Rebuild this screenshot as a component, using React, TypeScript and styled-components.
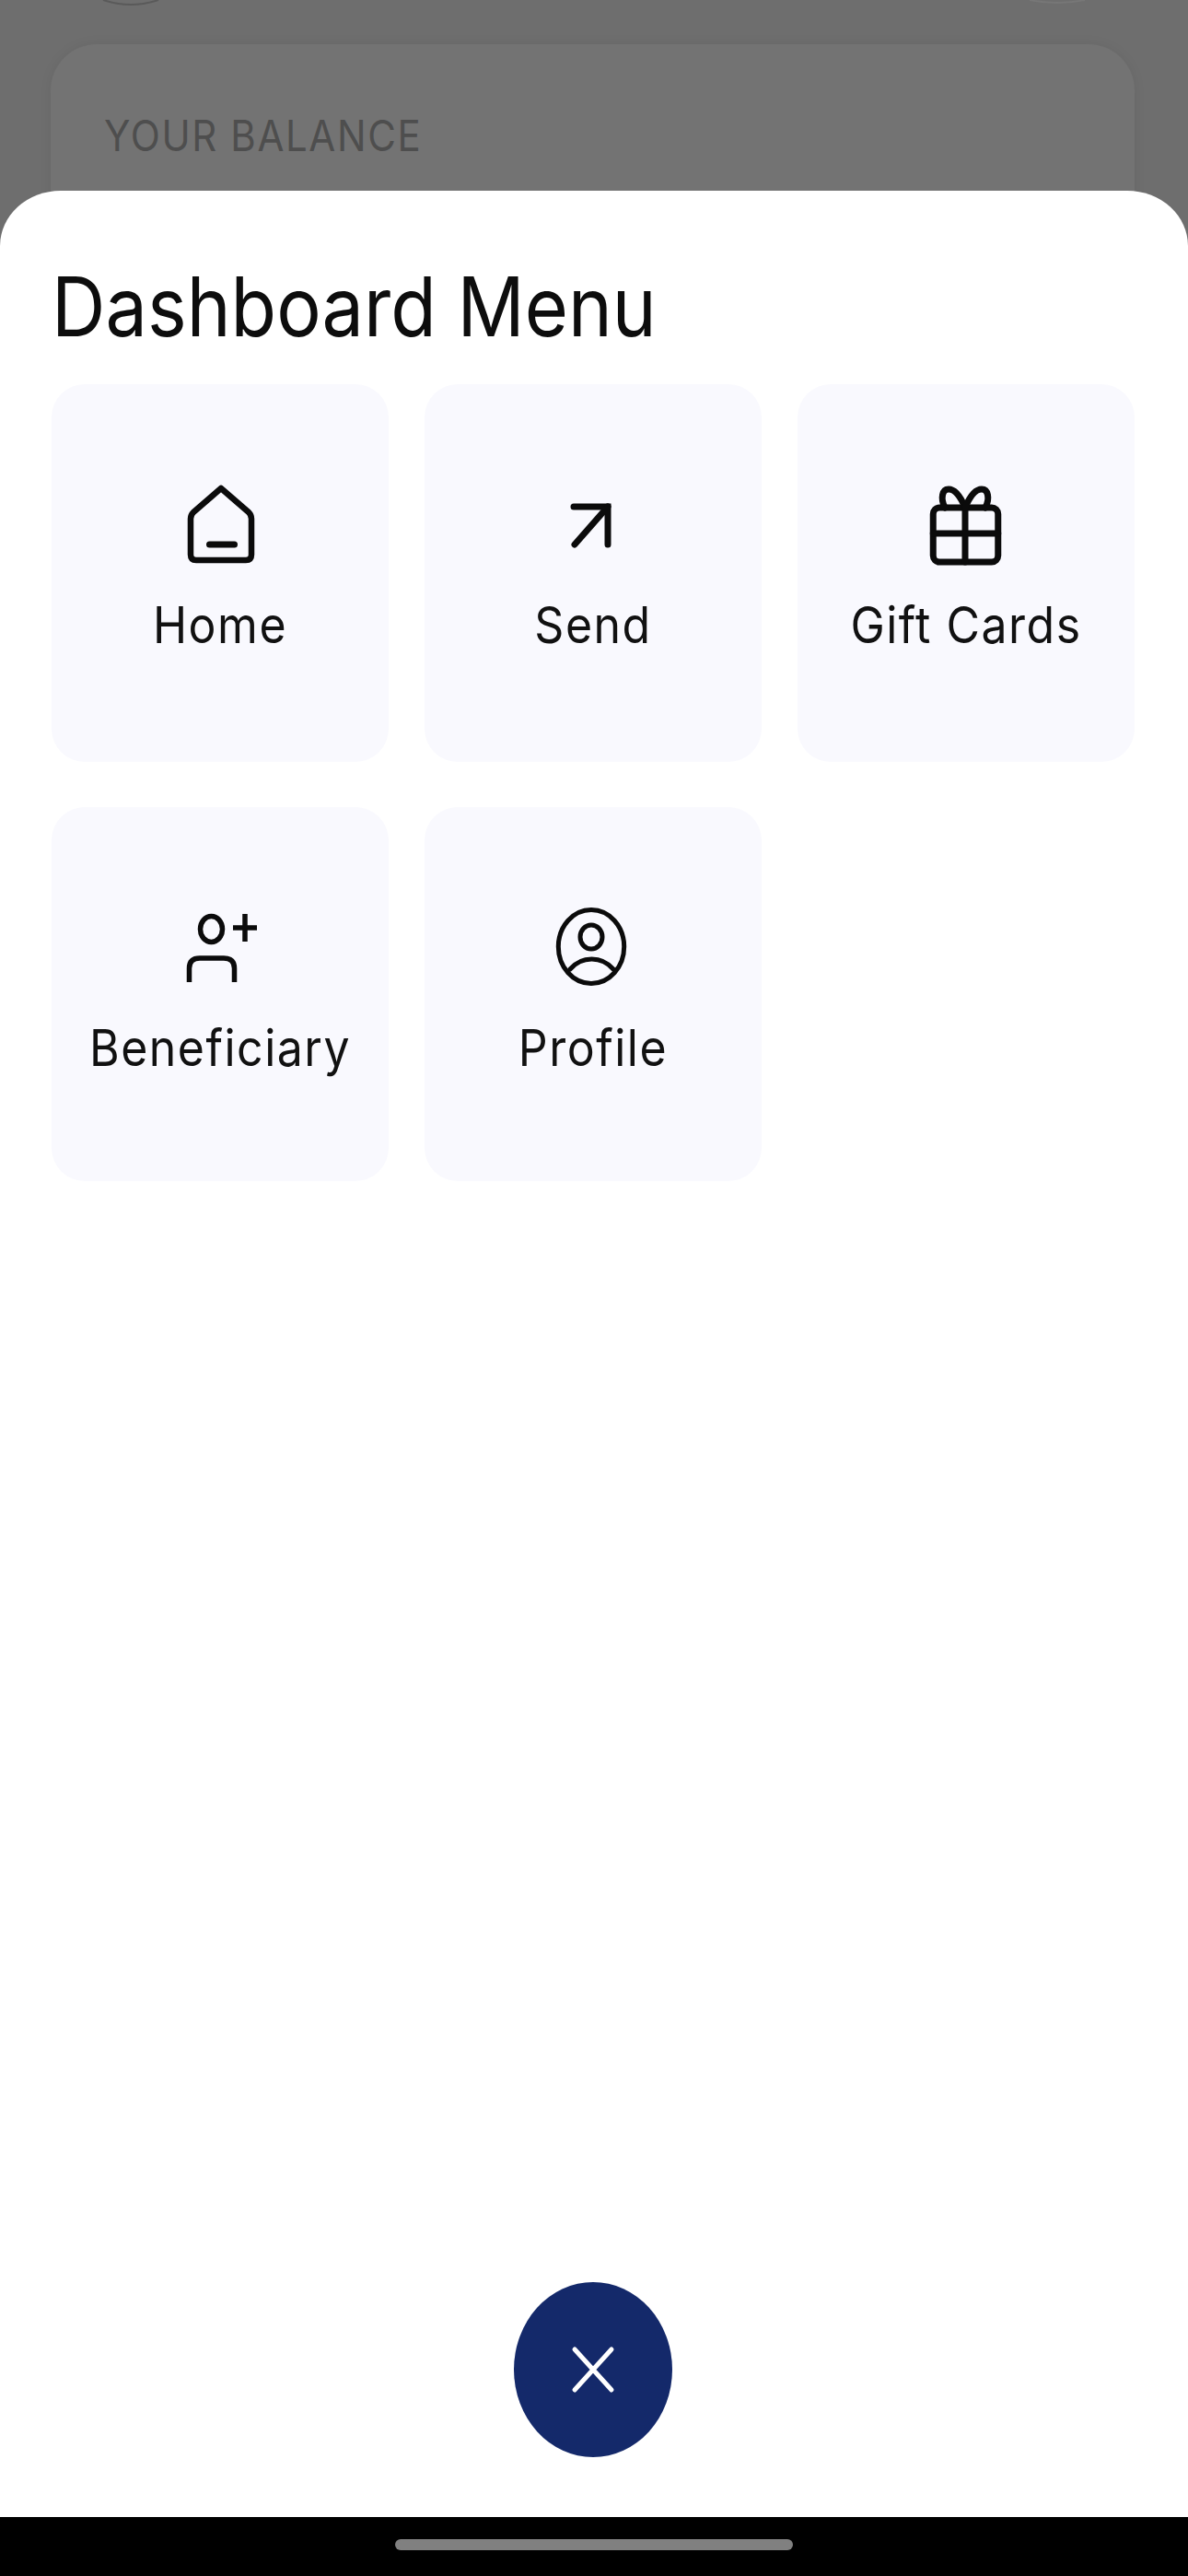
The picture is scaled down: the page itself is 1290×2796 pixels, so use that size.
import React from "react";
import styled, { createGlobalStyle } from "styled-components";

const Global = createGlobalStyle`
  html, body { margin: 0; padding: 0; background: #6e6e6e; }
  * { box-sizing: border-box; }
`;

const Screen = styled.div`
  width: 1290px;
  height: 2796px;
  display: flex;
  flex-direction: column;
  overflow: hidden;
  background: #6e6e6e;
  font-family: Inter, "Liberation Sans", sans-serif;
`;

const Backdrop = styled.div`
  height: 267px;
  flex: none;
  background: #6e6e6e;
  padding: 48px 58px 0 55px;
  overflow: hidden;
  position: relative;
`;

const PeekIcons = styled.svg`
  position: absolute;
  left: 0;
  top: 0;
`;

const BalanceCard = styled.div`
  height: 260px;
  background: #737373;
  border-radius: 50px 50px 0 0;
  box-shadow: 0 0 14px rgba(0, 0, 0, 0.06);
  padding: 74px 58px;
`;

const BalanceLabel = styled.div`
  font-size: 42px;
  line-height: 46px;
  letter-spacing: 1.6px;
  color: #4e4e4e;
  transform: scaleY(1.1);
  transform-origin: left top;
`;

const Sheet = styled.main`
  flex: 1;
  background: #fff;
  border-radius: 66px 66px 0 0 / 60px 60px 0 0;
  margin-top: -60px;
  position: relative;
  padding: 81px 58px 65px 56px;
  display: flex;
  flex-direction: column;
`;

const Title = styled.h1`
  margin: 0 0 47px 0;
  font-size: 81px;
  line-height: 82px;
  font-weight: 400;
  color: #0d0d0d;
  transform: scaleY(1.1);
  transform-origin: left top;
`;

const Grid = styled.div`
  display: grid;
  grid-template-columns: repeat(3, 366px);
  grid-template-rows: 410px 406px;
  column-gap: 39px;
  row-gap: 49px;
`;

const Tile = styled.div`
  background: #f9f9fe;
  border-radius: 36px;
  display: flex;
  flex-direction: column;
  align-items: center;
  padding-top: 106px;
`;

const TileIcon = styled.svg`
  width: 96px;
  height: 96px;
  flex: none;
  fill: none;
  stroke: #0b0b0b;
  stroke-linecap: round;
  stroke-linejoin: round;
`;

const TileLabel = styled.div`
  margin-top: 31px;
  font-size: 50px;
  line-height: 56px;
  color: #111;
  letter-spacing: 1.5px;
  transform: scaleY(1.1);
`;

const Fab = styled.button`
  margin: auto auto 0;
  width: 172px;
  height: 190px;
  flex: none;
  border: 0;
  padding: 0;
  border-radius: 50%;
  background: #14296a;
  display: flex;
  align-items: center;
  justify-content: center;
`;

const NavBar = styled.div`
  height: 64px;
  flex: none;
  background: #000;
  display: flex;
  justify-content: center;
  padding-top: 24px;
`;

const HomePill = styled.div`
  width: 432px;
  height: 12px;
  border-radius: 6px;
  background: #808080;
`;

const items = [
  {
    label: "Home",
    icon: (
      <TileIcon viewBox="0 0 96 96" strokeWidth={6.5}>
        <path d="M49 7 L79 33 Q82 36 82 40 V79 Q82 85 76 85 H22 Q16 85 16 79 V40 Q16 36 19 33 Z" />
        <path d="M36.5 68 H63.5" strokeWidth={7} />
      </TileIcon>
    ),
  },
  {
    label: "Send",
    icon: (
      <TileIcon viewBox="0 0 96 96" strokeWidth={7}>
        <path d="M27 27 H64 V68" strokeLinejoin="miter" />
        <path d="M64 27 L28 68" />
      </TileIcon>
    ),
  },
  {
    label: "Gift Cards",
    icon: (
      <TileIcon viewBox="0 0 96 96" strokeWidth={7}>
        <rect x="12.25" y="28" width="70.5" height="59" rx="7" />
        <path d="M12.25 56 H82.75 M47 28 V87" />
        <path d="M47 28 C42 16 36 8 29 8 C22 8 20 18 25 28" />
        <path d="M47 28 C52 16 58 8 65 8 C72 8 74 18 69 28" />
      </TileIcon>
    ),
  },
  {
    label: "Beneficiary",
    icon: (
      <TileIcon viewBox="0 0 96 96" strokeWidth={5.5}>
        <ellipse cx="38.5" cy="26.5" rx="12" ry="14" />
        <path d="M14.5 84 V69 Q14.5 58 26 58 H52 Q63.5 58 63.5 69 V84" strokeLinecap="butt" />
        <path d="M62 25 H88 M75 10 V40" strokeLinecap="butt" />
      </TileIcon>
    ),
  },
  {
    label: "Profile",
    icon: (
      <TileIcon viewBox="0 0 96 96" strokeWidth={5}>
        <ellipse cx="46" cy="45.5" rx="35.7" ry="40" />
        <ellipse cx="46" cy="35" rx="12" ry="13" />
        <path d="M23 70 C29 63 37 59 46.5 59 C56 59 64 63 70 70" />
      </TileIcon>
    ),
  },
];

export default function App() {
  return (
    <Screen>
      <Global />
      <Backdrop>
        <PeekIcons width="1290" height="12" viewBox="0 0 1290 12" fill="none" stroke="#5a5a5a" strokeWidth="2">
          <path d="M112 0 Q142 10 172 0" />
          <path d="M1118 0 Q1148 6 1178 0" stroke="#777" />
        </PeekIcons>
        <BalanceCard>
          <BalanceLabel>YOUR BALANCE</BalanceLabel>
        </BalanceCard>
      </Backdrop>
      <Sheet>
        <Title>Dashboard Menu</Title>
        <Grid>
          {items.map((item) => (
            <Tile key={item.label}>
              {item.icon}
              <TileLabel>{item.label}</TileLabel>
            </Tile>
          ))}
        </Grid>
        <Fab aria-label="Close">
          <svg width="48" height="52" viewBox="0 0 48 52" fill="none" stroke="#fff" strokeWidth="5" strokeLinecap="round">
            <path d="M4 4 L44 48 M44 4 L4 48" />
          </svg>
        </Fab>
      </Sheet>
      <NavBar>
        <HomePill />
      </NavBar>
    </Screen>
  );
}
